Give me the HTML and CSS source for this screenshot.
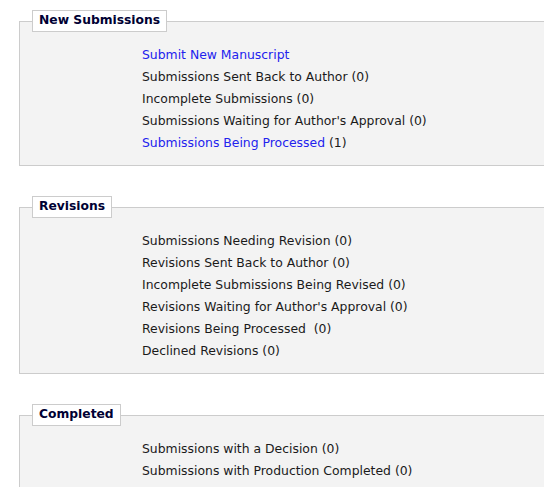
FILE: index.html
```html
<!DOCTYPE html>
<html>
<head>
<meta charset="utf-8">
<link rel="stylesheet" href="styles.css">
</head>
<body>
<div class="page">
  <fieldset class="panel">
    <legend class="panel-title">New Submissions</legend>
    <ul class="menu">
      <li><a class="link" href="#">Submit New Manuscript</a></li>
      <li>Submissions Sent Back to Author (0)</li>
      <li>Incomplete Submissions (0)</li>
      <li>Submissions Waiting for Author's Approval (0)</li>
      <li><a class="link" href="#">Submissions Being Processed</a> (1)</li>
    </ul>
  </fieldset>
  <fieldset class="panel">
    <legend class="panel-title">Revisions</legend>
    <ul class="menu">
      <li>Submissions Needing Revision (0)</li>
      <li>Revisions Sent Back to Author (0)</li>
      <li>Incomplete Submissions Being Revised (0)</li>
      <li>Revisions Waiting for Author's Approval (0)</li>
      <li>Revisions Being Processed&nbsp; (0)</li>
      <li>Declined Revisions (0)</li>
    </ul>
  </fieldset>
  <fieldset class="panel">
    <legend class="panel-title">Completed</legend>
    <ul class="menu">
      <li>Submissions with a Decision (0)</li>
      <li>Submissions with Production Completed (0)</li>
      <li>&nbsp;</li>
    </ul>
  </fieldset>
</div>
</body>
</html>
```
FILE: styles.css
```css
html, body {
  margin: 0;
  padding: 0;
  overflow: hidden;
  background: #ffffff;
}
body {
  font-family: "DejaVu Sans", Verdana, sans-serif;
  font-size: 12px;
  color: #1a1a1a;
}
.page {
  padding: 10px 0 0 19px;
  width: 620px;
}
.panel {
  margin: 0 0 30px 0;
  padding: 0 12px 11px 12px;
  border: 1px solid #cccccc;
  background: #f3f3f3;
}
.panel-title {
  padding: 2px 6px 3px 6px;
  border: 1px solid #cccccc;
  background: #ffffff;
  font-weight: bold;
  font-size: 12.3px;
  color: #000033;
  line-height: 15px;
}
.menu {
  list-style: none;
  margin: 12px 0 0 110px;
  padding: 0;
}
.menu li {
  line-height: 22px;
  font-size: 12.4px;
}
.link {
  color: #2222ee;
  text-decoration: none;
}
```
